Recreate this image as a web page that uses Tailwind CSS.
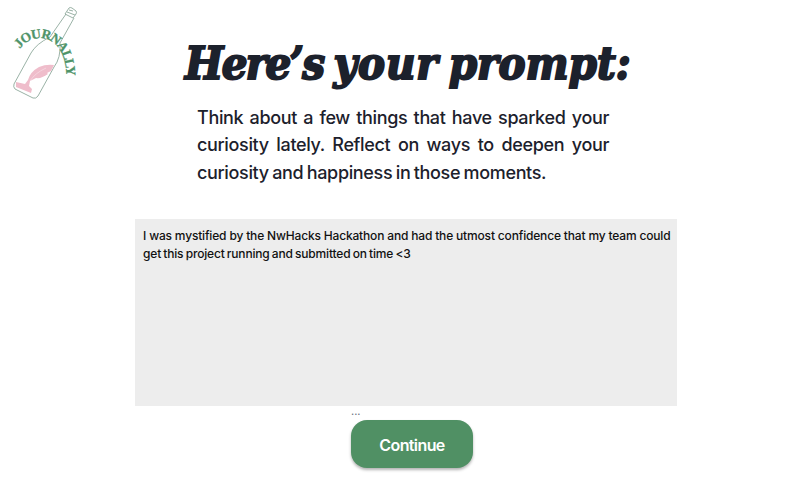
<!DOCTYPE html>
<html lang="en">
    <head>
        <meta charset="UTF-8">
        <meta name="viewport" content="width=device-width,initial-scale=1.0">
        <title>Journally</title>
        <script src="https://cdn.jsdelivr.net/npm/@tailwindcss/browser@4"></script>
    </head>
    <body class="h-screen overflow-hidden bg-white font-['Inter',sans-serif] text-[#1c212c]">
        <!-- Logo -->
        <svg class="absolute left-0 top-0" width="100" height="110" viewBox="0 0 100 110" fill="none">
            <g stroke="#8fa99c" stroke-width="0.9" stroke-linejoin="round">
                <path d="M66 14 50 37Q36 44 31 53L14 84Q13 87 15 89L33 98Q36 99 38 96L54 67Q61 58 60 43L74 18"/>
                <path d="M69 8Q70 7 72 8L76 11Q77 12 76 14L73 18 65 14ZM67 12 75 15M69 10 73 11"/>
            </g>
            <path d="M28 80Q30 72 39 67Q46 64 54 65L51 71 47 73 48 74Q41 79 36 78L30 81 29 86 32 89 31 93 16 87 16 82 25 84Z" fill="#efbdcb"/>
            <path d="M30 81Q35 73 46 68" stroke="#f9e2e9" stroke-width="0.6"/>
            <path id="arc" d="M20 49C26 40 37 36.5 46 39C58 43 67 55 66.5 82"/>
            <text class="font-['Liberation_Serif',serif] font-bold" font-size="13.5" fill="#4f9469" stroke="#4f9469" stroke-width="0.3"><textPath href="#arc" textLength="75">JOURNALLY</textPath></text>
        </svg>

        <main class="flex flex-col items-center pt-[30px]">
            <h1 class="ml-[10px] flex h-[68px] w-[446px] gap-[10px] whitespace-nowrap font-['DejaVu_Serif_Condensed','DejaVu_Serif',serif] text-[45px] leading-[68px] font-bold italic [-webkit-text-stroke:2px_#1c212c]">
                <span class="tracking-[-1.6px]">Here’s</span>
                <span class="tracking-[1px]">your</span>
                <span class="tracking-[0.1px]">prompt:</span>
            </h1>

            <div class="mt-[6px] w-[412px] text-[18px] leading-[27.4px] font-medium tracking-[-0.35px]">
                <p class="text-justify [text-align-last:justify]">Think about a few things that have sparked your</p>
                <p class="text-justify [text-align-last:justify]">curiosity lately. Reflect on ways to deepen your</p>
                <p class="[word-spacing:-1px]">curiosity and happiness in those moments.</p>
            </div>

            <div class="mt-[33px] ml-[6px] h-[187px] w-[542px] bg-[#ededed] pt-2 pl-[8px] text-[12px] leading-[18px] font-medium tracking-[-0.17px] text-[#111] whitespace-nowrap">
                <p>I was mystified by the NwHacks Hackathon and had the utmost confidence that my team could</p>
                <p class="[word-spacing:-0.8px]">get this project running and submitted on time &lt;3</p>
            </div>

            <div class="ml-[18px] w-[122px]">
                <p class="h-[14px] text-[11px] leading-[10px] text-gray-500">...</p>
                <button class="h-12 w-[122px] rounded-[16px] bg-[#509064] pt-px text-[16px] font-semibold tracking-[-0.6px] text-white shadow-[0_2px_3px_rgba(0,0,0,0.3)]">Continue</button>
            </div>
        </main>
    </body>
</html>
